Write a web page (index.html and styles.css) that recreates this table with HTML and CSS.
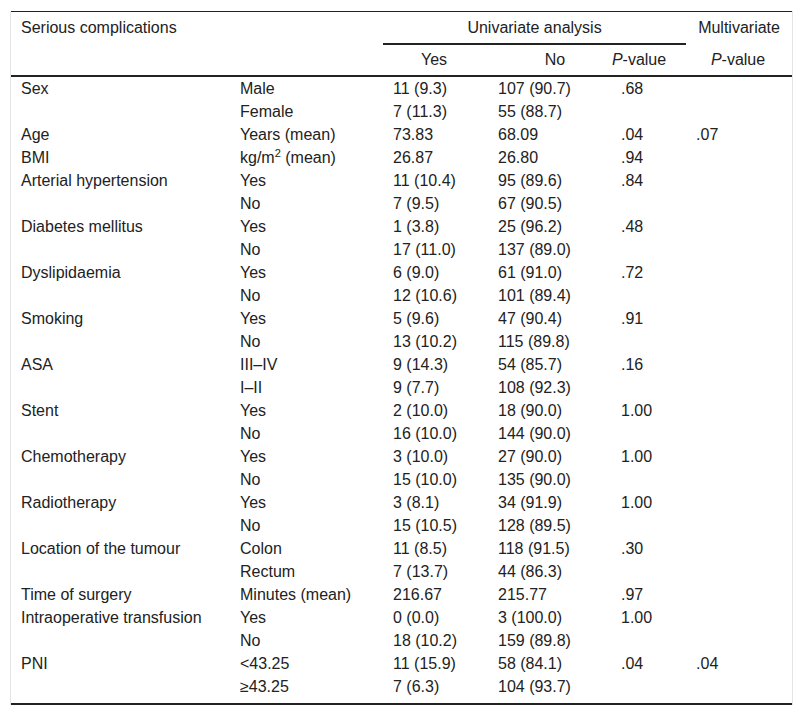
FILE: index.html
```html
<!DOCTYPE html>
<html>
<head>
<meta charset="utf-8">
<link rel="stylesheet" href="styles.css">
</head>
<body>
<div class="frame">
<table class="tbl">
<colgroup><col class="c1"><col class="c2"><col class="c3"><col class="c4"><col class="c5"><col class="c6"></colgroup>
<thead>
<tr class="h1"><th class="lab" colspan="2">Serious complications</th><th class="uni" colspan="3">Univariate analysis</th><th class="multi">Multivariate</th></tr>
<tr class="h2"><th colspan="2"></th><th class="hy">Yes</th><th class="hn">No</th><th class="hp"><i>P</i>-value</th><th class="hm"><i>P</i>-value</th></tr>
</thead>
<tbody>
<tr><td>Sex</td><td>Male</td><td>11 (9.3)</td><td>107 (90.7)</td><td>.68</td><td></td></tr>
<tr><td></td><td>Female</td><td>7 (11.3)</td><td>55 (88.7)</td><td></td><td></td></tr>
<tr><td>Age</td><td>Years (mean)</td><td>73.83</td><td>68.09</td><td>.04</td><td>.07</td></tr>
<tr><td>BMI</td><td>kg/m<sup>2</sup> (mean)</td><td>26.87</td><td>26.80</td><td>.94</td><td></td></tr>
<tr><td>Arterial hypertension</td><td>Yes</td><td>11 (10.4)</td><td>95 (89.6)</td><td>.84</td><td></td></tr>
<tr><td></td><td>No</td><td>7 (9.5)</td><td>67 (90.5)</td><td></td><td></td></tr>
<tr><td>Diabetes mellitus</td><td>Yes</td><td>1 (3.8)</td><td>25 (96.2)</td><td>.48</td><td></td></tr>
<tr><td></td><td>No</td><td>17 (11.0)</td><td>137 (89.0)</td><td></td><td></td></tr>
<tr><td>Dyslipidaemia</td><td>Yes</td><td>6 (9.0)</td><td>61 (91.0)</td><td>.72</td><td></td></tr>
<tr><td></td><td>No</td><td>12 (10.6)</td><td>101 (89.4)</td><td></td><td></td></tr>
<tr><td>Smoking</td><td>Yes</td><td>5 (9.6)</td><td>47 (90.4)</td><td>.91</td><td></td></tr>
<tr><td></td><td>No</td><td>13 (10.2)</td><td>115 (89.8)</td><td></td><td></td></tr>
<tr><td>ASA</td><td>III–IV</td><td>9 (14.3)</td><td>54 (85.7)</td><td>.16</td><td></td></tr>
<tr><td></td><td>I–II</td><td>9 (7.7)</td><td>108 (92.3)</td><td></td><td></td></tr>
<tr><td>Stent</td><td>Yes</td><td>2 (10.0)</td><td>18 (90.0)</td><td>1.00</td><td></td></tr>
<tr><td></td><td>No</td><td>16 (10.0)</td><td>144 (90.0)</td><td></td><td></td></tr>
<tr><td>Chemotherapy</td><td>Yes</td><td>3 (10.0)</td><td>27 (90.0)</td><td>1.00</td><td></td></tr>
<tr><td></td><td>No</td><td>15 (10.0)</td><td>135 (90.0)</td><td></td><td></td></tr>
<tr><td>Radiotherapy</td><td>Yes</td><td>3 (8.1)</td><td>34 (91.9)</td><td>1.00</td><td></td></tr>
<tr><td></td><td>No</td><td>15 (10.5)</td><td>128 (89.5)</td><td></td><td></td></tr>
<tr><td>Location of the tumour</td><td>Colon</td><td>11 (8.5)</td><td>118 (91.5)</td><td>.30</td><td></td></tr>
<tr><td></td><td>Rectum</td><td>7 (13.7)</td><td>44 (86.3)</td><td></td><td></td></tr>
<tr><td>Time of surgery</td><td>Minutes (mean)</td><td>216.67</td><td>215.77</td><td>.97</td><td></td></tr>
<tr><td>Intraoperative transfusion</td><td>Yes</td><td>0 (0.0)</td><td>3 (100.0)</td><td>1.00</td><td></td></tr>
<tr><td></td><td>No</td><td>18 (10.2)</td><td>159 (89.8)</td><td></td><td></td></tr>
<tr><td>PNI</td><td>&lt;43.25</td><td>11 (15.9)</td><td>58 (84.1)</td><td>.04</td><td>.04</td></tr>
<tr class="last"><td></td><td>≥43.25</td><td>7 (6.3)</td><td>104 (93.7)</td><td></td><td></td></tr>
</tbody>
</table>
</div>
</body>
</html>
```

FILE: styles.css
```css
html, body {
  margin: 0;
  padding: 0;
  background: #fff;
}
body {
  font-family: "Liberation Sans", Arial, sans-serif;
  font-size: 16px;
  color: #222;
}
.frame {
  margin: 11px 0 0 10px;
  width: 781px;
  border-left: 1px solid #e4e4e4;
  border-right: 1px solid #e4e4e4;
}
.tbl {
  width: 781px;
  table-layout: fixed;
  border-collapse: separate;
  border-spacing: 0;
  border-top: 1px solid #222;
}
.c1 { width: 219px; }
.c2 { width: 153px; }
.c3 { width: 105px; }
.c4 { width: 123px; }
.c5 { width: 75px; }
.c6 { width: 106px; }
th {
  font-weight: normal;
  padding: 0;
  text-align: center;
  white-space: nowrap;
}
.h1 th {
  line-height: 31px;
  vertical-align: top;
}
.h1 .lab {
  text-align: left;
  padding-left: 10px;
}
.h1 .uni {
  border-bottom: 2px solid #222;
}
.h1 .multi {
  vertical-align: top;
}
.h2 th {
  line-height: 30px;
  border-bottom: 2px solid #222;
}
.h2 .hy { padding-right: 3px; }
.h2 .hn { padding-left: 11px; }
.h2 .hp { padding-right: 19px; }
.h2 .hm { padding-right: 2px; }
td {
  padding: 0 0 0 10px;
  line-height: 23px;
  white-space: nowrap;
  vertical-align: top;
}
sup {
  font-size: 11px;
  line-height: 0;
  vertical-align: 6px;
}
.last td {
  padding-bottom: 5px;
  border-bottom: 2px solid #222;
}
```
